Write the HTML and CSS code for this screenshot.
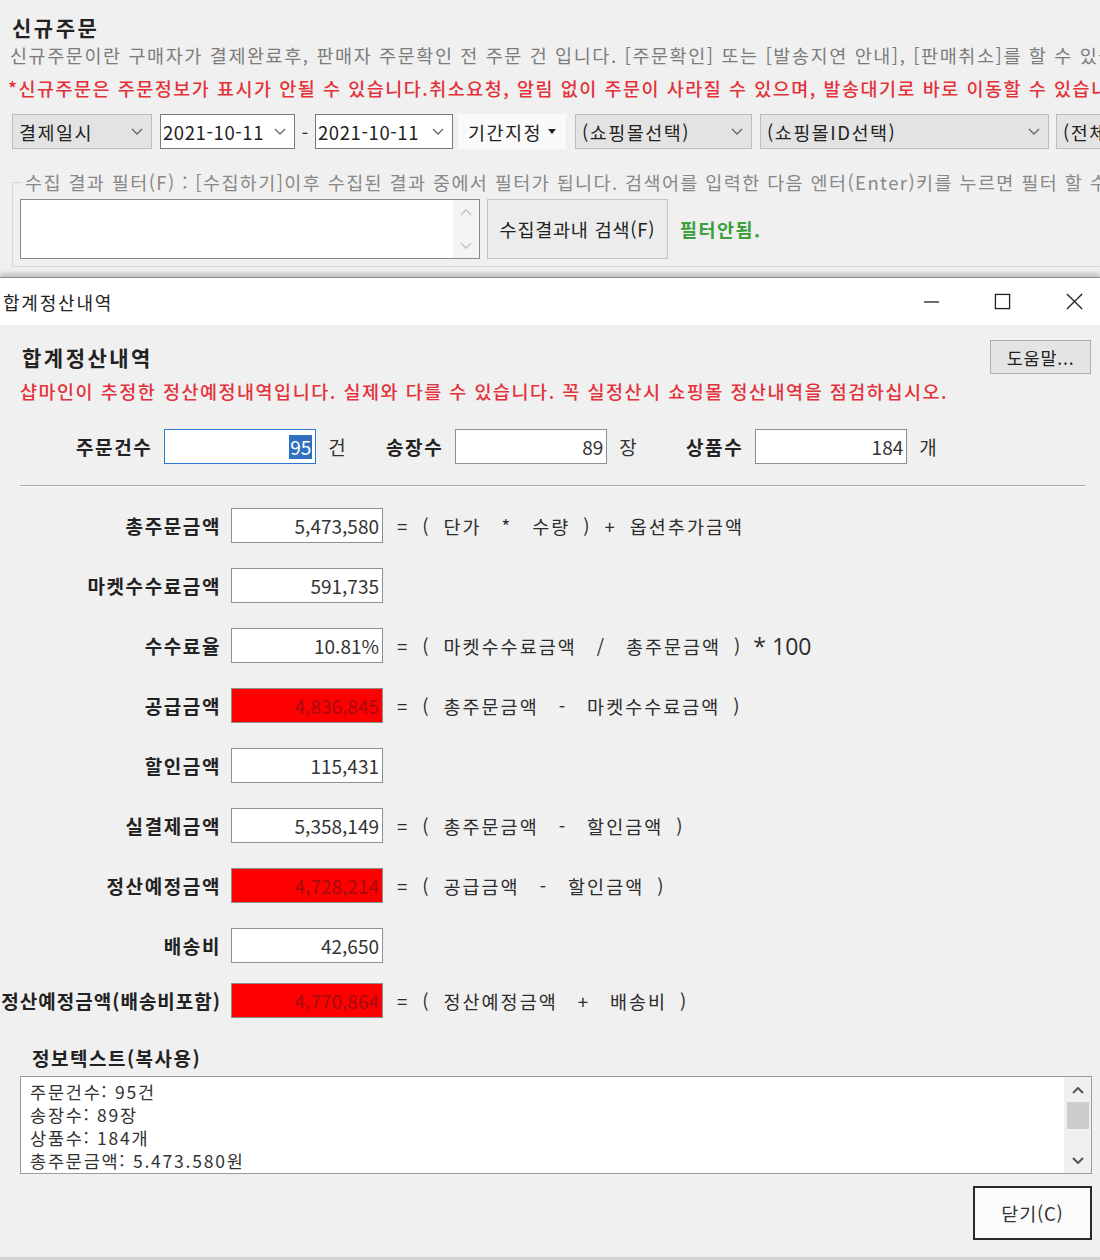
FILE: index.html
```html
<!DOCTYPE html>
<html lang="ko">
<head>
    <meta charset="UTF-8">
    <title>신규주문 - 합계정산내역</title>
    <link rel="stylesheet" href="styles.css">
</head>
<body>
<div class="screen">

    <!-- 뒤쪽 신규주문 화면 -->
    <section class="orders">
        <h1 class="orders-title">신규주문</h1>
        <p class="orders-desc">신규주문이란 구매자가 결제완료후, 판매자 주문확인 전 주문 건 입니다. [주문확인] 또는 [발송지연 안내], [판매취소]를 할 수 있습니다.</p>
        <p class="orders-warn">*신규주문은 주문정보가 표시가 안될 수 있습니다.취소요청, 알림 없이 주문이 사라질 수 있으며, 발송대기로 바로 이동할 수 있습니다.</p>

        <div class="toolbar">
            <div class="combo combo-gray w-date-kind">결제일시 <svg class="chev" viewBox="0 0 12 7"><path d="M1 1l5 5 5-5"/></svg></div>
            <div class="combo combo-white w-date">2021-10-11 <svg class="chev" viewBox="0 0 12 7"><path d="M1 1l5 5 5-5"/></svg></div>
            <span class="dash">-</span>
            <div class="combo combo-white w-date2">2021-10-11 <svg class="chev" viewBox="0 0 12 7"><path d="M1 1l5 5 5-5"/></svg></div>
            <div class="drop-btn">기간지정 <svg class="tri" viewBox="0 0 8 5"><path d="M0 0h8L4 5z"/></svg></div>
            <div class="combo combo-gray w-mall">(쇼핑몰선택) <svg class="chev" viewBox="0 0 12 7"><path d="M1 1l5 5 5-5"/></svg></div>
            <div class="combo combo-gray w-mallid">(쇼핑몰ID선택) <svg class="chev" viewBox="0 0 12 7"><path d="M1 1l5 5 5-5"/></svg></div>
            <div class="combo combo-gray w-all">(전체)</div>
        </div>

        <fieldset class="filter">
            <legend>수집 결과 필터(F) : [수집하기]이후 수집된 결과 중에서 필터가 됩니다. 검색어를 입력한 다음 엔터(Enter)키를 누르면 필터 할 수 있습니다.</legend>
            <div class="filter-row">
                <div class="filter-box">
                    <div class="filter-scroll">
                        <svg viewBox="0 0 12 7"><path d="M1 6l5-5 5 5"/></svg>
                        <svg viewBox="0 0 12 7"><path d="M1 1l5 5 5-5"/></svg>
                    </div>
                </div>
                <button class="btn filter-btn">수집결과내 검색(F)</button>
                <span class="filter-state">필터안됨.</span>
            </div>
        </fieldset>
    </section>

    <!-- 합계정산내역 창 -->
    <section class="dialog">
        <div class="titlebar">
            <span class="titlebar-text">합계정산내역</span>
            <div class="win-ctrls">
                <span class="win-btn"><svg viewBox="0 0 18 18"><path d="M1 9.5h16"/></svg></span>
                <span class="win-btn"><svg viewBox="0 0 18 18"><rect x="1.5" y="1.5" width="15" height="15"/></svg></span>
                <span class="win-btn win-close"><svg viewBox="0 0 18 18"><path d="M1 1l16 16M17 1L1 17"/></svg></span>
            </div>
        </div>

        <div class="dialog-body">
            <div class="dialog-head">
                <div>
                    <h2 class="dialog-title">합계정산내역</h2>
                    <p class="dialog-warn">샵마인이 추정한 정산예정내역입니다. 실제와 다를 수 있습니다. 꼭 실정산시 쇼핑몰 정산내역을 점검하십시오.</p>
                </div>
                <button class="btn help-btn">도움말...</button>
            </div>

            <div class="counts">
                <div class="count">
                    <span class="lbl">주문건수</span>
                    <span class="field field-focus"><span class="sel">95</span></span>
                    <span class="unit">건</span>
                </div>
                <div class="count">
                    <span class="lbl">송장수</span>
                    <span class="field">89</span>
                    <span class="unit">장</span>
                </div>
                <div class="count">
                    <span class="lbl">상품수</span>
                    <span class="field">184</span>
                    <span class="unit">개</span>
                </div>
            </div>

            <div class="rule"></div>

            <div class="calc">
                <div class="calc-row">
                    <span class="lbl">총주문금액</span>
                    <span class="field">5,473,580</span>
                    <span class="formula"><span>=</span><span>(</span><span>단가</span><span class="op">*</span><span>수량</span><span>)</span><span>+</span><span>옵션추가금액</span></span>
                </div>
                <div class="calc-row">
                    <span class="lbl">마켓수수료금액</span>
                    <span class="field">591,735</span>
                </div>
                <div class="calc-row">
                    <span class="lbl">수수료율</span>
                    <span class="field">10.81%</span>
                    <span class="formula"><span>=</span><span>(</span><span>마켓수수료금액</span><span class="op">/</span><span>총주문금액</span><span>)</span><span class="num">* 100</span></span>
                </div>
                <div class="calc-row">
                    <span class="lbl">공급금액</span>
                    <span class="field field-red">4,836,845</span>
                    <span class="formula"><span>=</span><span>(</span><span>총주문금액</span><span class="op">-</span><span>마켓수수료금액</span><span>)</span></span>
                </div>
                <div class="calc-row">
                    <span class="lbl">할인금액</span>
                    <span class="field">115,431</span>
                </div>
                <div class="calc-row">
                    <span class="lbl">실결제금액</span>
                    <span class="field">5,358,149</span>
                    <span class="formula"><span>=</span><span>(</span><span>총주문금액</span><span class="op">-</span><span>할인금액</span><span>)</span></span>
                </div>
                <div class="calc-row">
                    <span class="lbl">정산예정금액</span>
                    <span class="field field-red">4,728,214</span>
                    <span class="formula"><span>=</span><span>(</span><span>공급금액</span><span class="op">-</span><span>할인금액</span><span>)</span></span>
                </div>
                <div class="calc-row">
                    <span class="lbl">배송비</span>
                    <span class="field">42,650</span>
                </div>
                <div class="calc-row calc-row-last">
                    <span class="lbl lbl-long">정산예정금액(배송비포함)</span>
                    <span class="field field-red">4,770,864</span>
                    <span class="formula"><span>=</span><span>(</span><span>정산예정금액</span><span class="op">+</span><span>배송비</span><span>)</span></span>
                </div>
            </div>

            <div class="info">
                <div class="info-label">정보텍스트(복사용)</div>
                <div class="info-box">
                    <div class="info-text">주문건수: 95건<br>송장수: 89장<br>상품수: 184개<br>총주문금액: 5.473.580원</div>
                    <div class="info-scroll">
                        <svg viewBox="0 0 12 7"><path d="M1 6l5-5 5 5"/></svg>
                        <span class="thumb"></span>
                        <span class="spacer"></span>
                        <svg viewBox="0 0 12 7"><path d="M1 1l5 5 5-5"/></svg>
                    </div>
                </div>
            </div>

            <div class="footer">
                <button class="btn close-btn">닫기(C)</button>
            </div>
        </div>
    </section>
</div>
</body>
</html>
```

FILE: styles.css
```css
* { box-sizing: border-box; }
body { margin: 0; background: #f0f0f0; color: #222; font-family: "Noto Sans CJK KR", "Noto Sans", sans-serif; letter-spacing: 1.5px; overflow: hidden; }
.screen { width: 1100px; height: 1260px; overflow: hidden; display: flex; flex-direction: column; }

/* ---- 신규주문 (뒤 화면) ---- */
.orders { flex: none; width: 1300px; height: 277px; padding: 14px 0 0 10px; overflow: hidden; }
.orders-title { margin: 0 0 0 2px; font-size: 21px; font-weight: 700; line-height: 26px; letter-spacing: 2.5px; }
.orders-desc { margin: 2px 0 0; font-size: 18.5px; line-height: 26px; color: #7c7c7c; white-space: nowrap; letter-spacing: 1.6px; }
.orders-warn { margin: 7px 0 0 -2px; font-size: 18.5px; line-height: 26px; color: #e4323a; font-weight: 500; white-space: nowrap; letter-spacing: 1.5px; }

.toolbar { display: flex; align-items: center; height: 35px; margin: 13px 0 0 2px; }
.combo { height: 35px; display: flex; align-items: center; justify-content: space-between; padding: 0 8px 0 6px; font-size: 18.5px; border: 1px solid #bcbcbc; flex: none; }
.combo-gray { background: #e3e3e3; }
.combo-white { background: #fff; border-color: #7a7a7a; padding: 0 8px 0 2px; letter-spacing: 0.6px; }
.chev { width: 12px; height: 7px; fill: none; stroke: #666; stroke-width: 1.3; }
.w-date-kind { width: 140px; }
.w-date { width: 135px; margin-left: 8px; }
.w-date2 { width: 138px; }
.w-mall { width: 177px; margin-left: 9px; }
.w-mallid { width: 289px; margin-left: 8px; }
.w-all { width: 200px; margin-left: 7px; }
.dash { width: 20px; text-align: center; font-size: 18px; letter-spacing: 0; }
.drop-btn { height: 35px; width: 108px; margin-left: 5px; padding-left: 10px; display: flex; align-items: center; gap: 6px; background: #fafafa; font-size: 18.5px; }
.tri { width: 8px; height: 5px; fill: #222; }

.filter { margin: 21px 0 0 2px; width: 1200px; min-width: 0; border: 1px solid #d8d8d8; padding: 5px 0 7px 7px; }
.filter legend { margin-left: 2px; padding: 0 3px; font-size: 18.5px; line-height: 24px; color: #888; white-space: nowrap; letter-spacing: 1.4px; }
.filter-row { display: flex; align-items: center; }
.filter-box { width: 460px; height: 60px; background: #fff; border: 1px solid #8a8a8a; display: flex; justify-content: flex-end; }
.filter-scroll { width: 26px; background: #f4f4f4; display: flex; flex-direction: column; align-items: center; justify-content: space-between; padding: 9px 0; }
.filter-scroll svg { width: 12px; height: 7px; fill: none; stroke: #c4c4c4; stroke-width: 1.5; }
.btn { font-family: inherit; color: #222; cursor: default; letter-spacing: inherit; }
.filter-btn { width: 181px; height: 60px; margin-left: 7px; background: #ececec; border: 1px solid #c4c4c4; font-size: 18.5px; letter-spacing: 0.8px; }
.filter-state { margin-left: 12px; color: #3d9f3d; font-weight: 700; font-size: 18.5px; }

/* ---- 합계정산내역 창 ---- */
.dialog { flex: 1; display: flex; flex-direction: column; border-top: 1px solid #8c8c8c; border-bottom: 3px solid #d2d2d2; box-shadow: 0 -4px 4px rgba(0,0,0,0.18); }
.titlebar { height: 47px; flex: none; background: #fff; display: flex; align-items: center; justify-content: space-between; }
.titlebar-text { padding-left: 3px; font-size: 18px; letter-spacing: 1.8px; }
.win-ctrls { display: flex; height: 100%; }
.win-btn { width: 71px; display: flex; align-items: center; justify-content: center; }
.win-btn svg { width: 17px; height: 17px; fill: none; stroke: #222; stroke-width: 1.4; }
.win-close { width: 62px; padding-left: 10px; }

.dialog-body { flex: 1; padding-top: 18px; }
.dialog-head { display: flex; justify-content: space-between; align-items: flex-start; padding: 0 9px 0 22px; }
.dialog-title { margin: 0; font-size: 21px; font-weight: 700; line-height: 28px; letter-spacing: 2.5px; }
.dialog-warn { margin: 7px 0 0 -2px; font-size: 18.5px; line-height: 26px; color: #e4323a; font-weight: 500; letter-spacing: 1.5px; }
.help-btn { width: 101px; height: 34px; margin-top: -3px; background: #e4e4e4; border: 1px solid #adadad; font-size: 17.5px; letter-spacing: 0.8px; }

.counts { display: grid; grid-template-columns: 310px 300px auto; padding-left: 76px; margin-top: 25px; }
.count { display: flex; align-items: center; gap: 12px; }
.lbl { font-size: 19px; font-weight: 700; white-space: nowrap; letter-spacing: 1.6px; }
.unit { font-size: 19px; color: #333; }
.field { height: 35px; width: 152px; flex: none; display: flex; align-items: center; justify-content: flex-end; padding-right: 3px; background: #fff; border: 1px solid #8e8e8e; font-size: 19px; color: #333; letter-spacing: 0; }
.field-focus { border-color: #2a78d0; }
.sel { background: #2f70c0; color: #fff; line-height: 24px; padding: 0 1px; }
.field-red { background: #f00; color: #a10d0d; }

.rule { margin: 21px 15px 0 20px; height: 2px; background: #a9a9a9; border-bottom: 1px solid #fbfbfb; }

.calc { margin-top: 21px; }
.calc-row { display: grid; grid-template-columns: 219px 152px auto; column-gap: 12px; align-items: center; height: 35px; margin-top: 25px; }
.calc-row:first-child { margin-top: 0; }
.calc-row-last { margin-top: 20px; }
.calc-row .lbl { text-align: right; margin-right: -2px; }
.calc-row .lbl-long { letter-spacing: 1px; }
.formula { display: flex; align-items: center; gap: 13px; padding-left: 2px; font-size: 18.5px; color: #2c2c2c; letter-spacing: 2px; }
.formula .op { margin: 0 7px; }
.formula .num { font-family: "Open Sans", "Noto Sans", sans-serif; font-size: 23px; margin-left: -2px; letter-spacing: 0; }

.info { padding: 0 8px 0 20px; margin-top: 28px; }
.info-label { padding-left: 12px; font-size: 19px; font-weight: 700; line-height: 24px; }
.info-box { margin-top: 6px; height: 98px; background: #fff; border: 1px solid #9c9c9c; display: flex; overflow: hidden; }
.info-text { flex: 1; padding: 3px 0 0 9px; font-size: 17.5px; line-height: 23px; color: #333; letter-spacing: 1.8px; }
.info-scroll { width: 27px; background: #f0f0f0; display: flex; flex-direction: column; align-items: center; padding: 10px 0 9px; }
.info-scroll svg { width: 12px; height: 7px; fill: none; stroke: #555; stroke-width: 2; flex: none; }
.thumb { width: 22px; height: 27px; margin-top: 8px; background: #cdcdcd; }
.spacer { flex: 1; }

.footer { display: flex; justify-content: flex-end; padding-right: 8px; margin-top: 12px; }
.close-btn { width: 119px; height: 54px; background: #fbfbfb; border: 2px solid #2b2b2b; font-size: 18.5px; color: #333; letter-spacing: 0.8px; }
```
